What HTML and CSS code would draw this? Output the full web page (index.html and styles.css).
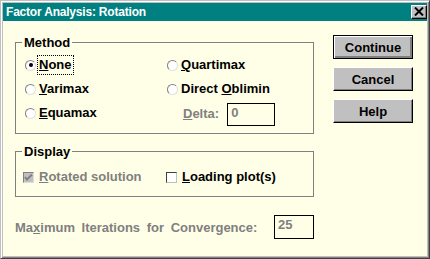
FILE: index.html
```html
<!DOCTYPE html>
<html>
<head>
<meta charset="utf-8">
<link rel="stylesheet" href="styles.css">
</head>
<body>
<div class="window">
  <div class="titlebar">
    <span class="title">Factor Analysis: Rotation</span>
    <span class="close"><svg width="10" height="9" viewBox="0 0 10 9"><path d="M1 0.5 L9 8.5 M9 0.5 L1 8.5" stroke="#000" stroke-width="2"/></svg></span>
  </div>
  <div class="body">
    <div class="main">
      <fieldset class="group method">
        <legend>Method</legend>
        <div class="opts method-grid">
          <div class="opt"><span class="radio checked"></span><span class="lbl focus"><u>N</u>one</span></div>
          <div class="opt"><span class="radio"></span><span class="lbl"><u>Q</u>uartimax</span></div>
          <div class="opt"><span class="radio"></span><span class="lbl"><u>V</u>arimax</span></div>
          <div class="opt"><span class="radio"></span><span class="lbl">Direct <u>O</u>blimin</span></div>
          <div class="opt"><span class="radio"></span><span class="lbl"><u>E</u>quamax</span></div>
          <div class="opt delta"><span class="dis"><u>D</u>elta:</span><span class="field dis">0</span></div>
        </div>
      </fieldset>
      <fieldset class="group display">
        <legend>Display</legend>
        <div class="opts display-grid">
          <div class="opt"><span class="check disabled"><svg width="9" height="9" viewBox="0 0 9 9"><path d="M1 4 L3 6.5 L8 1.5" stroke="#808080" stroke-width="2" fill="none"/></svg></span><span class="lbl dis"><u>R</u>otated solution</span></div>
          <div class="opt"><span class="check"></span><span class="lbl"><u>L</u>oading plot(s)</span></div>
        </div>
      </fieldset>
      <div class="maxiter">
        <span class="maxlbl dis">Ma<u>x</u>imum Iterations for Convergence:</span>
        <span class="field maxfield dis">25</span>
      </div>
    </div>
    <div class="buttons">
      <button class="btn default">Continue</button>
      <button class="btn">Cancel</button>
      <button class="btn">Help</button>
    </div>
  </div>
</div>
</body>
</html>
```
FILE: styles.css
```css
html, body {
  margin: 0;
  padding: 0;
  background: #c0c0c0;
}
body {
  font-family: "Liberation Sans", Arial, sans-serif;
  font-weight: bold;
  font-size: 13px;
  line-height: 15px;
  color: #000;
}
.window {
  box-sizing: border-box;
  width: 430px;
  height: 259px;
  border: 1px solid;
  border-color: #c0c0c0 #404040 #404040 #c0c0c0;
  padding: 2px;
  background: #c0c0c0;
  box-shadow: inset 1px 1px #fff, inset -1px -1px #808080;
  display: flex;
  flex-direction: column;
}
.titlebar {
  height: 18px;
  background: #008080;
  display: flex;
  align-items: center;
  justify-content: space-between;
  padding-left: 3px;
}
.title {
  color: #fff;
  font-size: 12px;
  letter-spacing: -0.2px;
}
.close {
  box-sizing: border-box;
  width: 16px;
  height: 14px;
  margin-right: 0;
  background: #c0c0c0;
  border: 1px solid;
  border-color: #fff #000 #000 #fff;
  box-shadow: inset -1px -1px #808080;
  display: flex;
  align-items: center;
  justify-content: center;
}
.close svg { display: block; margin-top: -1px; }
.body {
  flex: 1;
  background: #ffffe7;
  display: flex;
  gap: 19px;
  padding: 14px 0 0 12px;
}
.main {
  width: 299px;
  display: flex;
  flex-direction: column;
}
.group {
  margin: 0;
  padding: 0;
  border: 1px solid #808080;
  min-width: 0;
}
.group legend {
  margin-left: 6px;
  padding: 0 2px;
  line-height: 15px;
}
.display { margin-top: 10px; }
.opts {
  display: grid;
  grid-auto-rows: 24px;
}
.method-grid {
  grid-template-columns: 142px auto;
  padding: 3px 0 8px 9px;
}
.display-grid {
  grid-template-columns: 143px auto;
  padding: 6px 0 7px 7px;
}
.opt {
  display: flex;
  align-items: center;
}
.radio {
  box-sizing: border-box;
  width: 11px;
  height: 11px;
  border-radius: 50%;
  border: 1px solid;
  border-color: #808080 #e0e0e0 #e0e0e0 #808080;
  background: #fff;
  position: relative;
  flex: none;
}
.radio.checked::after {
  content: "";
  position: absolute;
  left: 2.5px;
  top: 2.5px;
  width: 4px;
  height: 4px;
  border-radius: 50%;
  background: #000;
}
.lbl {
  margin-left: 1px;
  padding: 1px 1px 2px 1px;
  border: 1px solid transparent;
}
.lbl.focus {
  border: 1px dotted #000;
}
.check {
  box-sizing: border-box;
  width: 11px;
  height: 11px;
  border: 1px solid;
  border-color: #404040 #c0c0c0 #c0c0c0 #404040;
  background: #fff;
  margin-right: 2px;
  flex: none;
  display: flex;
  align-items: center;
  justify-content: center;
}
.check.disabled {
  background: #c0c0c0;
  border-color: #808080 #dfdfdf #dfdfdf #808080;
}
.check svg { display: block; }
.dis { color: #808080; }
.delta {
  padding-left: 16px;
  gap: 8px;
}
.field {
  box-sizing: border-box;
  border: 1px solid #000;
  background: #ffffe7;
  height: 23px;
  padding: 1px 3px;
  line-height: 15px;
  display: block;
}
.delta .field { width: 48px; margin-top: 2px; }
.maxiter {
  margin-top: 18px;
  display: flex;
  align-items: center;
  height: 24px;
}
.maxlbl {
  width: 260px;
  word-spacing: 3px;
}
.maxfield {
  width: 40px;
  height: 24px;
  padding-left: 3px;
}
.buttons {
  display: flex;
  flex-direction: column;
  gap: 8px;
  width: 80px;
}
.btn {
  box-sizing: border-box;
  width: 80px;
  height: 24px;
  margin: 0;
  padding: 0;
  font: inherit;
  color: #000;
  background: #c0c0c0;
  border: 1px solid;
  border-color: #fff #000 #000 #fff;
  box-shadow: inset -1px -1px #808080;
}
.btn.default {
  border: 1px solid #000;
  box-shadow: inset 1px 1px #fff, inset -2px -2px #808080;
}
```
